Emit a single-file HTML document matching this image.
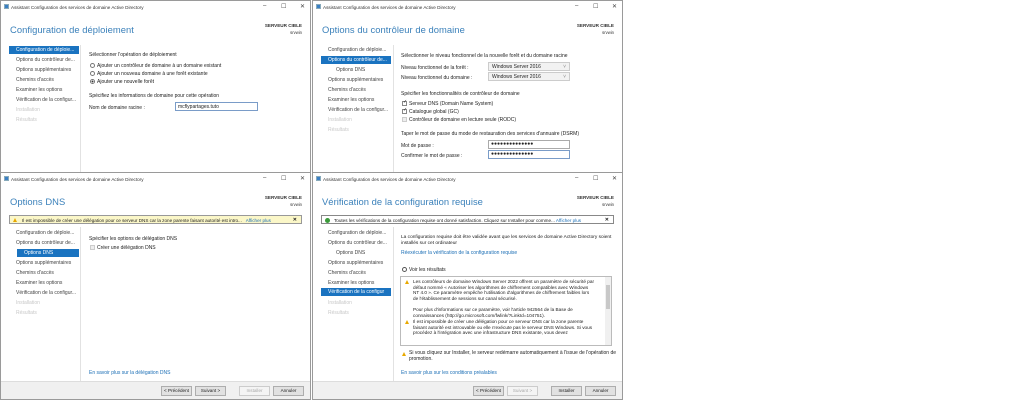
<!DOCTYPE html>
<html><head><meta charset="utf-8"><style>
*{margin:0;padding:0;box-sizing:border-box}
body{width:1024px;height:400px;background:#fff;position:relative;overflow:hidden;font-family:"Liberation Sans",sans-serif;font-size:5px;color:#222}
.a{position:absolute;white-space:nowrap}
.win{position:absolute;background:#fff;border:1px solid #9a9a9a;overflow:hidden}
.tt{position:absolute;left:10px;top:4px;font-size:4.6px;color:#333}
.ic{position:absolute;left:3px;top:3px;width:5px;height:5px;background:#3b7fc4;border:1px solid #8ab}
.ctl{position:absolute;top:2px;font-size:6px;color:#444}
.h{position:absolute;left:9px;font-size:9.4px;color:#3a80ba;font-weight:normal;letter-spacing:.05px}
.sc{position:absolute;right:8px;font-size:4.6px;font-weight:bold;color:#333;text-align:right}
.sv{position:absolute;right:8px;font-size:4.2px;color:#333}
.sb{position:absolute;left:15px;font-size:5px;color:#444}
.dis{color:#c8c8c8}
.sel{position:absolute;left:8px;width:70px;height:8px;background:#1a73c0}
.selt{color:#fff}
.div{position:absolute;left:79px;width:1px;background:#e2e2e2}
.inp{position:absolute;border:1px solid #7a9cc8;background:#fff;height:9px}
.cb{position:absolute;width:5px;height:5px;border:1px solid #888;background:#fff}
.rd{position:absolute;width:5px;height:5px;border:1px solid #777;border-radius:50%;background:#fff}
.foot{position:absolute;left:0;right:0;bottom:0;height:18px;background:#f0f0f0;border-top:1px solid #ddd}
.btn{position:absolute;top:4px;width:31px;height:10px;border:1px solid #adadad;background:#e1e1e1;font-size:4.6px;text-align:center;line-height:8px;color:#222}
.btn.d{color:#aaa;border-color:#ccc;background:#f4f4f4}
.lk{color:#1c6fb6}
.warn{position:absolute;left:8px;right:8px;height:9px;border:1px solid #999;background:#fbf7c8}
.tri{position:absolute;width:0;height:0;border-left:2.5px solid transparent;border-right:2.5px solid transparent;border-bottom:4.5px solid #e8a800}
</style></head><body>

<!-- TOP LEFT -->
<div class="win" style="left:0;top:0;width:311px;height:173px">
<div class="ic"></div><div class="tt">Assistant Configuration des services de domaine Active Directory</div>
<div class="ctl" style="left:262px">–</div><div class="ctl" style="left:280px">☐</div><div class="ctl" style="left:299px">✕</div>
<div class="h" style="top:23px">Configuration de déploiement</div>
<div class="sc" style="top:22px">SERVEUR CIBLE</div><div class="sv" style="top:29px">srvwin</div>
<div class="sel" style="top:45px"></div>
<div class="sb selt" style="top:46px">Configuration de déploie...</div>
<div class="sb" style="top:56px">Options du contrôleur de...</div>
<div class="sb" style="top:66px">Options supplémentaires</div>
<div class="sb" style="top:76px">Chemins d'accès</div>
<div class="sb" style="top:86px">Examiner les options</div>
<div class="sb" style="top:96px">Vérification de la configur...</div>
<div class="sb dis" style="top:106px">Installation</div>
<div class="sb dis" style="top:116px">Résultats</div>
<div class="div" style="top:44px;height:130px"></div>
<div class="a" style="left:88px;top:51px">Sélectionner l'opération de déploiement</div>
<div class="rd" style="left:89px;top:62px"></div><div class="a" style="left:96px;top:62px">Ajouter un contrôleur de domaine à un domaine existant</div>
<div class="rd" style="left:89px;top:70px"></div><div class="a" style="left:96px;top:70px">Ajouter un nouveau domaine à une forêt existante</div>
<div class="rd" style="left:89px;top:78px;background:radial-gradient(#333 35%,#fff 45%)"></div><div class="a" style="left:96px;top:78px">Ajouter une nouvelle forêt</div>
<div class="a" style="left:88px;top:92px">Spécifiez les informations de domaine pour cette opération</div>
<div class="a" style="left:88px;top:104px">Nom de domaine racine :</div>
<div class="inp" style="left:174px;top:101px;width:83px"><span class="a" style="left:2px;top:1px">mcflypartages.tuto</span></div>
</div>

<!-- TOP RIGHT -->
<div class="win" style="left:312px;top:0;width:311px;height:173px">
<div class="ic"></div><div class="tt">Assistant Configuration des services de domaine Active Directory</div>
<div class="ctl" style="left:262px">–</div><div class="ctl" style="left:280px">☐</div><div class="ctl" style="left:299px">✕</div>
<div class="h" style="top:23px">Options du contrôleur de domaine</div>
<div class="sc" style="top:22px">SERVEUR CIBLE</div><div class="sv" style="top:29px">srvwin</div>
<div class="sb" style="top:46px">Configuration de déploie...</div>
<div class="sel" style="top:55px"></div>
<div class="sb selt" style="top:56px">Options du contrôleur de...</div>
<div class="sb" style="top:66px;left:23px">Options DNS</div>
<div class="sb" style="top:76px">Options supplémentaires</div>
<div class="sb" style="top:86px">Chemins d'accès</div>
<div class="sb" style="top:96px">Examiner les options</div>
<div class="sb" style="top:106px">Vérification de la configur...</div>
<div class="sb dis" style="top:116px">Installation</div>
<div class="sb dis" style="top:126px">Résultats</div>
<div class="div" style="top:44px;height:130px;left:80px"></div>
<div class="a" style="left:88px;top:52px">Sélectionner le niveau fonctionnel de la nouvelle forêt et du domaine racine</div>
<div class="a" style="left:88px;top:64px">Niveau fonctionnel de la forêt :</div>
<div class="inp" style="left:175px;top:61px;width:82px;border-color:#ccc;background:#f2f2f2"><span class="a" style="left:3px;top:1px">Windows Server 2016</span><span class="a" style="right:3px;top:1px;color:#888">˅</span></div>
<div class="a" style="left:88px;top:74px">Niveau fonctionnel du domaine :</div>
<div class="inp" style="left:175px;top:71px;width:82px;border-color:#ccc;background:#f2f2f2"><span class="a" style="left:3px;top:1px">Windows Server 2016</span><span class="a" style="right:3px;top:1px;color:#888">˅</span></div>
<div class="a" style="left:88px;top:90px">Spécifier les fonctionnalités de contrôleur de domaine</div>
<div class="cb" style="left:89px;top:100px"></div><div class="a" style="left:90px;top:98px;font-size:5px">✓</div><div class="a" style="left:96px;top:100px">Serveur DNS (Domain Name System)</div>
<div class="cb" style="left:89px;top:108px"></div><div class="a" style="left:90px;top:106px;font-size:5px">✓</div><div class="a" style="left:96px;top:108px">Catalogue global (GC)</div>
<div class="cb" style="left:89px;top:116px;background:#eee;border-color:#ccc"></div><div class="a" style="left:96px;top:116px">Contrôleur de domaine en lecture seule (RODC)</div>
<div class="a" style="left:88px;top:130px">Taper le mot de passe du mode de restauration des services d'annuaire (DSRM)</div>
<div class="a" style="left:88px;top:142px">Mot de passe :</div>
<div class="inp" style="left:175px;top:139px;width:82px;border-color:#aaa"><span class="a" style="left:2px;top:0px;font-size:5px">●●●●●●●●●●●●●●</span></div>
<div class="a" style="left:88px;top:152px">Confirmer le mot de passe :</div>
<div class="inp" style="left:175px;top:149px;width:82px"><span class="a" style="left:2px;top:0px;font-size:5px">●●●●●●●●●●●●●●</span></div>
</div>

<!-- BOTTOM LEFT -->
<div class="win" style="left:0;top:172px;width:311px;height:228px">
<div class="ic"></div><div class="tt">Assistant Configuration des services de domaine Active Directory</div>
<div class="ctl" style="left:262px">–</div><div class="ctl" style="left:280px">☐</div><div class="ctl" style="left:299px">✕</div>
<div class="h" style="top:23px">Options DNS</div>
<div class="sc" style="top:22px">SERVEUR CIBLE</div><div class="sv" style="top:29px">srvwin</div>
<div class="warn" style="top:42px"><div class="tri" style="left:3px;top:2px"></div><span class="a" style="left:12px;top:1.5px;font-size:4.6px">Il est impossible de créer une délégation pour ce serveur DNS car la zone parente faisant autorité est intro... <span class="lk">&nbsp;&nbsp;Afficher plus</span></span><span class="a" style="right:4px;top:1px;font-weight:bold">✕</span></div>
<div class="sb" style="top:57px">Configuration de déploie...</div>
<div class="sb" style="top:67px">Options du contrôleur de...</div>
<div class="sel" style="top:76px;left:16px;width:62px"></div>
<div class="sb selt" style="top:77px;left:23px">Options DNS</div>
<div class="sb" style="top:87px">Options supplémentaires</div>
<div class="sb" style="top:97px">Chemins d'accès</div>
<div class="sb" style="top:107px">Examiner les options</div>
<div class="sb" style="top:117px">Vérification de la configur...</div>
<div class="sb dis" style="top:127px">Installation</div>
<div class="sb dis" style="top:137px">Résultats</div>
<div class="div" style="top:54px;height:155px"></div>
<div class="a" style="left:88px;top:63px">Spécifier les options de délégation DNS</div>
<div class="cb" style="left:89px;top:72px;background:#eee;border-color:#ccc"></div><div class="a" style="left:96px;top:72px">Créer une délégation DNS</div>
<div class="a lk" style="left:88px;top:197px">En savoir plus sur la délégation DNS</div>
<div class="foot"><div class="btn" style="left:160px">&lt; Précédent</div><div class="btn" style="left:194px">Suivant &gt;</div><div class="btn d" style="left:238px">Installer</div><div class="btn" style="left:272px">Annuler</div></div>
</div>

<!-- BOTTOM RIGHT -->
<div class="win" style="left:312px;top:172px;width:311px;height:228px">
<div class="ic"></div><div class="tt">Assistant Configuration des services de domaine Active Directory</div>
<div class="ctl" style="left:262px">–</div><div class="ctl" style="left:280px">☐</div><div class="ctl" style="left:299px">✕</div>
<div class="h" style="top:23px">Vérification de la configuration requise</div>
<div class="sc" style="top:22px">SERVEUR CIBLE</div><div class="sv" style="top:29px">srvwin</div>
<div class="warn" style="top:42px;background:#fff;border-color:#888"><div class="a" style="left:3px;top:1.5px;width:5px;height:5px;border-radius:50%;background:#3a9a3a"></div><span class="a" style="left:12px;top:1.5px;font-size:4.6px">Toutes les vérifications de la configuration requise ont donné satisfaction. Cliquez sur Installer pour comme... <span class="lk">Afficher plus</span></span><span class="a" style="right:4px;top:1px;font-weight:bold">✕</span></div>
<div class="sb" style="top:57px">Configuration de déploie...</div>
<div class="sb" style="top:67px">Options du contrôleur de...</div>
<div class="sb" style="top:77px;left:23px">Options DNS</div>
<div class="sb" style="top:87px">Options supplémentaires</div>
<div class="sb" style="top:97px">Chemins d'accès</div>
<div class="sb" style="top:107px">Examiner les options</div>
<div class="sel" style="top:115px"></div>
<div class="sb selt" style="top:116px">Vérification de la configur</div>
<div class="sb dis" style="top:127px">Installation</div>
<div class="sb dis" style="top:137px">Résultats</div>
<div class="div" style="top:54px;height:155px;left:80px"></div>
<div class="a" style="left:88px;top:62px;line-height:5.5px;font-size:4.8px">La configuration requise doit être validée avant que les services de domaine Active Directory soient<br>installés sur cet ordinateur</div>
<div class="a lk" style="left:88px;top:77px">Réexécuter la vérification de la configuration requise</div>
<div class="a" style="left:89px;top:94px;width:5px;height:5px;border:1px solid #555;border-radius:50%"></div><div class="a" style="left:96px;top:94px">Voir les résultats</div>
<div class="a" style="left:87px;top:103px;width:212px;height:70px;border:1px solid #bbb;overflow:hidden">
<div class="tri" style="left:4px;top:3px"></div>
<div class="a" style="left:12px;top:2px;line-height:5.6px;font-size:4.7px">Les contrôleurs de domaine Windows Server 2022 offrent un paramètre de sécurité par<br>défaut nommé « Autoriser les algorithmes de chiffrement compatibles avec Windows<br>NT 4.0 ». Ce paramètre empêche l'utilisation d'algorithmes de chiffrement faibles lors<br>de l'établissement de sessions sur canal sécurisé.<br><br>Pour plus d'informations sur ce paramètre, voir l'article 942564 de la Base de<br>connaissances (http://go.microsoft.com/fwlink/?LinkId=104751).</div>
<div class="tri" style="left:4px;top:43px"></div>
<div class="a" style="left:12px;top:42px;line-height:5.6px;font-size:4.7px">Il est impossible de créer une délégation pour ce serveur DNS car la zone parente<br>faisant autorité est introuvable ou elle n'exécute pas le serveur DNS Windows. Si vous<br>procédez à l'intégration avec une infrastructure DNS existante, vous devez</div>
<div class="a" style="right:0;top:0;width:6px;height:68px;background:#f0f0f0"></div>
<div class="a" style="right:1px;top:8px;width:4px;height:24px;background:#c8c8c8"></div>
</div>
<div class="tri" style="left:89px;top:179px"></div>
<div class="a" style="left:96px;top:178px;line-height:5.5px">Si vous cliquez sur Installer, le serveur redémarre automatiquement à l'issue de l'opération de<br>promotion.</div>
<div class="a lk" style="left:88px;top:197px">En savoir plus sur les conditions préalables</div>
<div class="foot"><div class="btn" style="left:160px">&lt; Précédent</div><div class="btn d" style="left:194px">Suivant &gt;</div><div class="btn" style="left:238px">Installer</div><div class="btn" style="left:272px">Annuler</div></div>
</div>

</body></html>
